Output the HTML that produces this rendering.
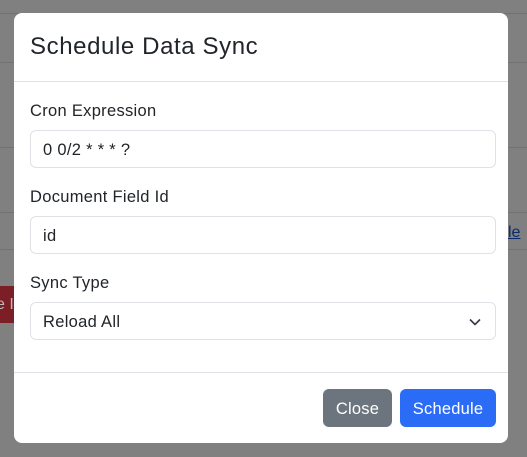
<!DOCTYPE html>
<html><head><meta charset="utf-8"><style>
*{box-sizing:border-box;margin:0;padding:0}
html,body{width:527px;height:457px;overflow:hidden}
body{background:#808080;font-family:"Liberation Sans",sans-serif;color:#212529;position:relative}
.hl{position:absolute;left:0;right:0;height:1px;background:#727272}
.red{position:absolute;left:0;top:286px;width:14px;height:37px;background:#7b1e26;color:#bbb;font-size:16px;line-height:37px;overflow:hidden;white-space:nowrap;text-indent:-4px}
.lnk{position:absolute;left:508px;top:224px;color:#0a2a6e;text-decoration:underline;font-size:16px}
.modal{position:absolute;left:14px;top:13px;width:494px;height:430px;background:#fff;border-radius:8px}
.hdr{height:69px;border-bottom:1px solid #dee2e6;padding:0 16px}
.hdr h5{font-size:24px;font-weight:400;line-height:67px;letter-spacing:0.6px}
.lbl{position:absolute;left:16px;font-size:16.5px;letter-spacing:0.3px}
.inp{position:absolute;left:16px;width:466px;height:38px;border:1px solid #dee2e6;border-radius:6px;padding:0 12px;font-size:16.5px;line-height:38px;letter-spacing:0.3px}
.ftr{position:absolute;left:0;right:0;top:359px;border-top:1px solid #dee2e6}
.btn{position:absolute;top:376px;height:38px;border-radius:6px;color:#fff;font-size:16.5px;line-height:40px;text-align:center;letter-spacing:0.2px}
</style></head><body>
<div class="hl" style="top:13px"></div>
<div class="hl" style="top:62px"></div>
<div class="hl" style="top:147px"></div>
<div class="hl" style="top:212px"></div>
<div class="hl" style="top:249px"></div>
<div class="red">e Ir</div>
<div class="lnk">le</div>
<div class="modal">
<div class="hdr"><h5>Schedule Data Sync</h5></div>
<div class="lbl" style="top:89px">Cron Expression</div>
<div class="inp" style="top:117px">0 0/2 * * * ?</div>
<div class="lbl" style="top:175px">Document Field Id</div>
<div class="inp" style="top:203px">id</div>
<div class="lbl" style="top:261px">Sync Type</div>
<div class="inp" style="top:289px">Reload All
<svg style="position:absolute;right:14px;top:15px" width="12" height="8" viewBox="0 0 12 8"><path d="M1 1.5l5 5 5-5" fill="none" stroke="#343a40" stroke-width="1.6"/></svg></div>
<div class="ftr"></div>
<div class="btn" style="left:309px;width:69px;background:#6c757d">Close</div>
<div class="btn" style="left:386px;width:96px;background:#2b6cf6">Schedule</div>
</div>
</body></html>
